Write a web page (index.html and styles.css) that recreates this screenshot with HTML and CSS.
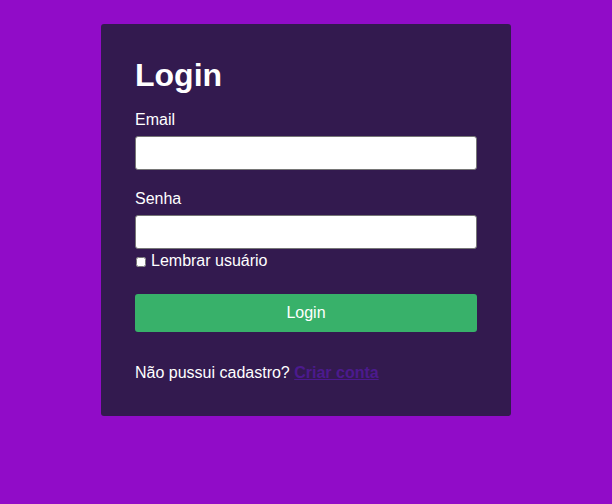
FILE: index.html
```html
<!DOCTYPE html>
<html lang="pt-BR">
<head>
<meta charset="utf-8">
<title>Login</title>
<link rel="stylesheet" href="styles.css">
</head>
<body>
<main class="page">
  <form class="card">
    <h1 class="title">Login</h1>
    <label class="label" for="email">Email</label>
    <input class="input" id="email" type="email">
    <label class="label" for="senha">Senha</label>
    <input class="input input-last" id="senha" type="password">
    <label class="remember"><input class="check" type="checkbox">Lembrar usuário</label>
    <button class="btn" type="button">Login</button>
    <p class="signup">Não pussui cadastro? <a class="link" href="#">Criar conta</a></p>
  </form>
</main>
</body>
</html>
```
FILE: styles.css
```css
* { box-sizing: border-box; }
html, body {
  margin: 0;
  padding: 0;
  background: #910cc8;
  font-family: "Liberation Sans", Arial, sans-serif;
  color: #ffffff;
}
.page {
  display: flex;
  justify-content: center;
  padding-top: 24px;
}
.card {
  width: 410px;
  background: #331a4f;
  border-radius: 3px;
  padding: 33px 34px 34px;
  display: flex;
  flex-direction: column;
}
.title {
  margin: 0 0 17px;
  font-size: 32px;
  font-weight: bold;
  line-height: 37px;
}
.label {
  font-size: 16px;
  line-height: 18px;
  margin-bottom: 7px;
}
.input {
  height: 34px;
  width: 100%;
  border: 1px solid #767676;
  border-radius: 3px;
  background: #fff;
  margin: 0 0 20px;
  font-size: 16px;
}
.input-last { margin-bottom: 3px; }
.remember {
  display: flex;
  align-items: center;
  font-size: 16px;
  line-height: 18px;
}
.check {
  width: 10px;
  height: 10px;
  margin: 1px 5px 0 1px;
}
.btn {
  margin-top: 24px;
  height: 38px;
  border: none;
  border-radius: 3px;
  background: #38b16a;
  color: #fff;
  font-family: "Liberation Sans", Arial, sans-serif;
  font-size: 16px;
}
.signup {
  margin: 32px 0 0;
  font-size: 16px;
  line-height: 18px;
}
.link {
  color: #4c1a8e;
  font-weight: bold;
  text-decoration: underline;
}
```
